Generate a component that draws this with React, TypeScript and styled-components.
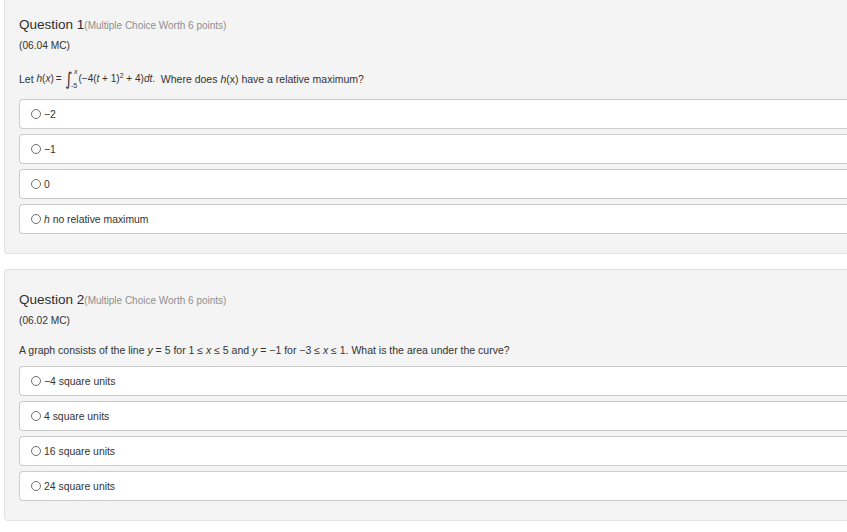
import * as React from 'react';
import styled, { createGlobalStyle } from 'styled-components';

const GlobalStyle = createGlobalStyle`
  html, body {
    margin: 0;
    padding: 0;
    background: #ffffff;
    overflow: hidden;
  }
  body {
    font-family: "Liberation Sans", Arial, sans-serif;
    color: #333333;
  }
`;

const Page = styled.div`
  display: flex;
  flex-direction: column;
  gap: 15px;
  margin-top: -6px;
  padding-left: 4px;
  width: 880px;
`;

const Card = styled.section`
  background: #f4f4f4;
  border: 1px solid #e2e2e2;
  border-right: none;
  border-radius: 4px 0 0 4px;
  padding: 21px 0 19px 14px;
`;

const TitleRow = styled.div`
  display: flex;
  align-items: baseline;
  height: 18px;
  line-height: 18px;
`;

const Title = styled.span`
  font-size: 13.5px;
  color: #2e2e2e;
`;

const Worth = styled.span`
  font-size: 10px;
  color: #8f8f8f;
`;

const Code = styled.div`
  margin-top: 4px;
  font-size: 10.2px;
  line-height: 16px;
  color: #333333;
`;

const Prompt = styled.div`
  display: flex;
  align-items: center;
  min-height: 16px;
  margin: 13px 0 8px;
  font-size: 10.5px;
  line-height: 16px;
  color: #333333;
  white-space: pre;
`;

const Var = styled.i`
  font-style: italic;
`;

const MathExpr = styled.span`
  display: inline-flex;
  align-items: center;
  font-size: 10px;
  color: #333333;
  white-space: pre;
`;

const Op = styled.span`
  padding: 0 2px;
`;

const Integral = styled.span`
  display: inline-flex;
  align-items: center;
  margin-right: 1px;
`;

const IntSign = styled.span`
  font-family: "DejaVu Sans", sans-serif;
  font-size: 18px;
  line-height: 24px;
  transform: scaleX(0.8);
`;

const Limits = styled.span`
  display: inline-flex;
  flex-direction: column;
  justify-content: space-between;
  height: 22px;
  font-size: 7px;
  line-height: 8px;
`;

const Upper = styled.span`
  margin-left: 1px;
`;

const Lower = styled.span`
  margin-left: -2px;
`;

const Integrand = styled.span`
  display: inline-block;
  line-height: 16px;
`;

const Power = styled.sup`
  font-size: 7px;
  line-height: 0;
  vertical-align: 4px;
`;

const OptionList = styled.div`
  display: flex;
  flex-direction: column;
  gap: 5px;
`;

const Option = styled.div`
  display: flex;
  align-items: center;
  gap: 3px;
  height: 30px;
  box-sizing: border-box;
  padding-left: 11px;
  background: #ffffff;
  border: 1px solid #cccccc;
  border-right: none;
  border-radius: 4px 0 0 4px;
`;

const Radio = styled.span`
  width: 8px;
  height: 8px;
  border: 1px solid #6f6f6f;
  border-radius: 50%;
  background: #ffffff;
  flex-shrink: 0;
`;

const OptionText = styled.span`
  font-size: 10.4px;
  color: #333333;
  white-space: pre;
`;

interface QuestionData {
  number: number;
  worth: number;
  code: string;
  prompt: React.ReactNode;
  options: React.ReactNode[];
}

const IntegralExpr: React.FC = () => (
  <MathExpr>
    <Var>h</Var>(<Var>x</Var>)<Op>=</Op>
    <Integral>
      <IntSign>∫</IntSign>
      <Limits>
        <Upper>
          <Var>x</Var>
        </Upper>
        <Lower>-5</Lower>
      </Limits>
    </Integral>
    <Integrand>
      (−4(<Var>t</Var>
      {' + '}1)<Power>2</Power>
      {' + '}4)<Var>dt</Var>.
    </Integrand>
  </MathExpr>
);

const getQuestions = (): QuestionData[] => [
  {
    number: 1,
    worth: 6,
    code: '06.04 MC',
    prompt: (
      <>
        {'Let '}
        <IntegralExpr />
        {'  Where does '}
        <Var>h</Var>
        {'(x) have a relative maximum?'}
      </>
    ),
    options: [
      '−2',
      '−1',
      '0',
      <>
        <Var>h</Var>
        {' no relative maximum'}
      </>,
    ],
  },
  {
    number: 2,
    worth: 6,
    code: '06.02 MC',
    prompt: (
      <>
        {'A graph consists of the line '}
        <Var>y</Var>
        {' = 5 for 1 ≤ '}
        <Var>x</Var>
        {' ≤ 5 and '}
        <Var>y</Var>
        {' = −1 for −3 ≤ '}
        <Var>x</Var>
        {' ≤ 1. What is the area under the curve?'}
      </>
    ),
    options: ['−4 square units', '4 square units', '16 square units', '24 square units'],
  },
];

const QuestionCard: React.FC<{ question: QuestionData }> = ({ question }) => (
  <Card>
    <TitleRow>
      <Title>Question {question.number}</Title>
      <Worth>(Multiple Choice Worth {question.worth} points)</Worth>
    </TitleRow>
    <Code>({question.code})</Code>
    <Prompt>{question.prompt}</Prompt>
    <OptionList>
      {question.options.map((option, i) => (
        <Option key={i}>
          <Radio />
          <OptionText>{option}</OptionText>
        </Option>
      ))}
    </OptionList>
  </Card>
);

export default function App() {
  const questions = getQuestions();
  return (
    <>
      <GlobalStyle />
      <Page>
        {questions.map((q) => (
          <QuestionCard key={q.number} question={q} />
        ))}
      </Page>
    </>
  );
}
